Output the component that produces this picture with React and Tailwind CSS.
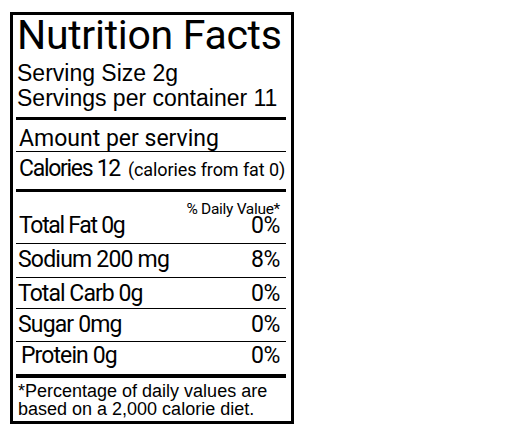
import React from 'react';

const rows = [
  { label: 'Sodium 200 mg', pct: '8%', h: 'h-[33px]', pt: 'pt-[4px]', track: 'tracking-[-0.8px]' },
  { label: 'Total Carb 0g', pct: '0%', h: 'h-[30px]', pt: 'pt-[4px]', track: 'tracking-[-0.95px]' },
  { label: 'Sugar 0mg', pct: '0%', h: 'h-[32px]', pt: 'pt-[4px]', track: 'tracking-[-0.85px]' },
  { label: 'Protein 0g', pct: '0%', h: 'h-[32px]', pt: 'pt-[2px]', track: 'tracking-[-0.9px]', indent: true },
];

const Thin = () => <div className="h-px bg-black" />;
const Thick = ({ h = 'h-[3px]' }) => <div className={`${h} bg-black`} />;

export default function App() {
  return (
    <div className="w-[512px] h-[438px] bg-white pl-[10px] pt-[12px]">
      <div className="w-[284px] h-[412px] border-[3px] border-black pl-[3px] pr-[5px] text-black">
        {/* Header */}
        <h1 className="font-['Roboto',sans-serif] text-[41px] leading-[40px] pl-[1px] tracking-[-0.3px]">
          Nutrition Facts
        </h1>
        <div className="pt-[6px] pl-[1px] font-['Liberation_Sans',Arial,sans-serif] text-[23px] leading-[25px]">
          <p>Serving Size 2g</p>
          <p>Servings per container 11</p>
        </div>
        <div className="mt-[6px]">
          <Thick />
        </div>

        <div className="font-['Roboto',sans-serif] text-[23px] leading-[24px] whitespace-nowrap">
          <div className="h-[31px] pt-[7px] pl-[3px] tracking-[0px]">Amount per serving</div>
          <Thin />
          <div className="h-[37px] pt-[5px] pl-[3px] flex items-baseline">
            <span className="tracking-[-1.3px]">Calories 12</span>
            <span className="ml-[8px] text-[18px] tracking-[-0.1px]">(calories from fat 0)</span>
          </div>
          <Thick />

          {/* Daily value header + first row */}
          <div className="h-[51px] pt-[10px] pl-[3px] pr-[6px]">
            <div className="text-right text-[15.5px] leading-[14px] tracking-[-0.3px]">% Daily Value*</div>
            <div className="flex justify-between leading-[20px]">
              <span className="tracking-[-1.3px]">Total Fat 0g</span>
              <span className="tracking-[-0.4px]">0%</span>
            </div>
          </div>
          <Thin />

          {rows.map((r, i) => (
            <div key={r.label}>
              <div className={`${r.h} ${r.pt} ${r.indent ? 'pl-[5px]' : 'pl-[2px]'} pr-[6px] flex justify-between`}>
                <span className={r.track}>{r.label}</span>
                <span className="tracking-[-0.4px]">{r.pct}</span>
              </div>
              {i < rows.length - 1 && <Thin />}
            </div>
          ))}
          <Thick h="h-[4px]" />
        </div>

        {/* Footnote */}
        <div className="pt-[4px] pl-[2px] font-['Liberation_Sans',Arial,sans-serif] text-[18px] leading-[18px]">
          <p>*Percentage of daily values are</p>
          <p>based on a 2,000 calorie diet.</p>
        </div>
      </div>
    </div>
  );
}
